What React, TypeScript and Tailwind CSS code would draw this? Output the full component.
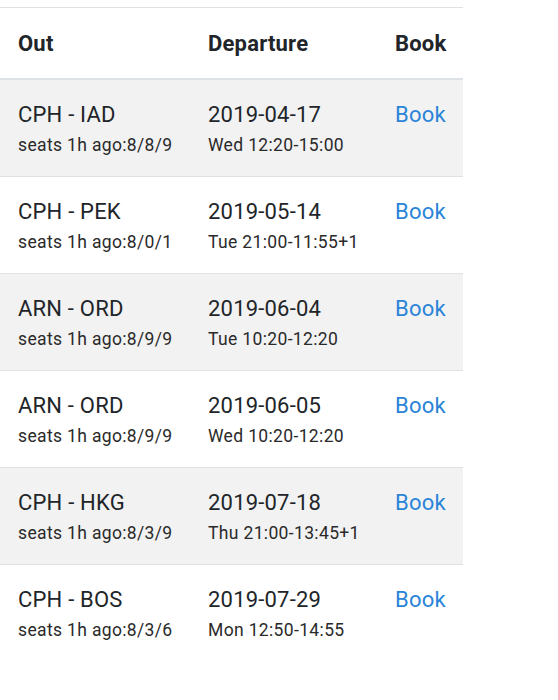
import React from "react";

const rows = [
  { route: "CPH - IAD", seats: "8/8/9", date: "2019-04-17", time: "Wed 12:20-15:00" },
  { route: "CPH - PEK", seats: "8/0/1", date: "2019-05-14", time: "Tue 21:00-11:55+1" },
  { route: "ARN - ORD", seats: "8/9/9", date: "2019-06-04", time: "Tue 10:20-12:20" },
  { route: "ARN - ORD", seats: "8/9/9", date: "2019-06-05", time: "Wed 10:20-12:20" },
  { route: "CPH - HKG", seats: "8/3/9", date: "2019-07-18", time: "Thu 21:00-13:45+1" },
  { route: "CPH - BOS", seats: "8/3/6", date: "2019-07-29", time: "Mon 12:50-14:55" },
];

export default function App() {
  return (
    <div className="w-[558px] h-[700px] bg-white pt-[7px] text-[#212529]" style={{ fontFamily: "Roboto, 'Noto Sans', sans-serif" }}>
      <div className="w-[463px] border-t border-[#dee2e6]">
        <div className="grid grid-cols-[190px_187px_86px] h-[72px] items-center border-b-2 border-[#dee2e6] text-[22px] font-bold tracking-[0.2px]">
          <div className="pl-[18px]">Out</div>
          <div className="pl-[18px]">Departure</div>
          <div className="pl-[18px]">Book</div>
        </div>
        {rows.map((r, i) => (
          <div
            key={i}
            className={`grid grid-cols-[190px_187px_86px] h-[97px] pt-[21px] ${i % 2 === 0 ? "bg-[#f2f2f2]" : "bg-white"} ${i < rows.length - 1 ? "border-b border-[#dee2e6]" : ""}`}
          >
            <div className="pl-[18px]">
              <div className="text-[22px] leading-[28px] tracking-[0.2px]">{r.route}</div>
              <div className="text-[17.5px] leading-[22px] mt-[5px] tracking-[0.35px] text-[#2a2a2a]">seats 1h ago:{r.seats}</div>
            </div>
            <div className="pl-[18px]">
              <div className="text-[22px] leading-[28px] tracking-[0.2px]">{r.date}</div>
              <div className="text-[17.5px] leading-[22px] mt-[5px] tracking-[0.35px] text-[#2a2a2a]">{r.time}</div>
            </div>
            <div className="pl-[18px]">
              <a className="text-[22px] leading-[28px] tracking-[0.2px] text-[#2a84d8]" href="#">Book</a>
            </div>
          </div>
        ))}
      </div>
    </div>
  );
}
